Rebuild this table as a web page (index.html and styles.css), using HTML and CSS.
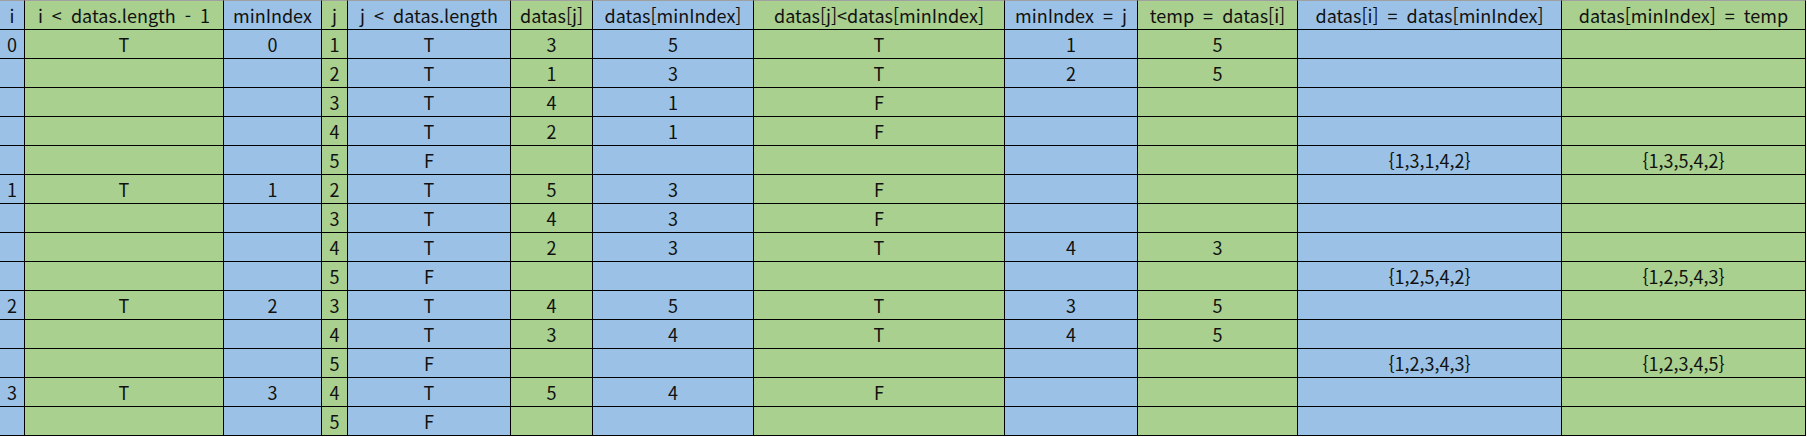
FILE: index.html
```html
<!DOCTYPE html>
<html lang="ko">
<head>
<meta charset="utf-8">
<title>Selection sort trace</title>
<link rel="stylesheet" href="styles.css">
</head>
<body>
<table class="trace">
  <colgroup>
    <col class="w-i"><col class="w-cond1"><col class="w-min"><col class="w-j"><col class="w-cond2"><col class="w-dj">
    <col class="w-dm"><col class="w-cmp"><col class="w-set"><col class="w-temp"><col class="w-swap1"><col class="w-swap2">
  </colgroup>
  <thead>
    <tr>
      <th class="b">i</th><th class="g">i &lt; datas.length - 1</th><th class="b">minIndex</th><th class="g">j</th><th class="b">j &lt; datas.length</th><th class="g">datas[j]</th>
      <th class="b">datas[minIndex]</th><th class="g">datas[j]&lt;datas[minIndex]</th><th class="b">minIndex = j</th><th class="g">temp = datas[i]</th><th class="b">datas[i] = datas[minIndex]</th><th class="g">datas[minIndex] = temp</th>
    </tr>
  </thead>
  <tbody>
    <tr><td class="b">0</td><td class="g">T</td><td class="b">0</td><td class="g">1</td><td class="b">T</td><td class="g">3</td><td class="b">5</td><td class="g">T</td><td class="b">1</td><td class="g">5</td><td class="b"></td><td class="g"></td></tr>
    <tr><td class="b"></td><td class="g"></td><td class="b"></td><td class="g">2</td><td class="b">T</td><td class="g">1</td><td class="b">3</td><td class="g">T</td><td class="b">2</td><td class="g">5</td><td class="b"></td><td class="g"></td></tr>
    <tr><td class="b"></td><td class="g"></td><td class="b"></td><td class="g">3</td><td class="b">T</td><td class="g">4</td><td class="b">1</td><td class="g">F</td><td class="b"></td><td class="g"></td><td class="b"></td><td class="g"></td></tr>
    <tr><td class="b"></td><td class="g"></td><td class="b"></td><td class="g">4</td><td class="b">T</td><td class="g">2</td><td class="b">1</td><td class="g">F</td><td class="b"></td><td class="g"></td><td class="b"></td><td class="g"></td></tr>
    <tr><td class="b"></td><td class="g"></td><td class="b"></td><td class="g">5</td><td class="b">F</td><td class="g"></td><td class="b"></td><td class="g"></td><td class="b"></td><td class="g"></td><td class="b">{1,3,1,4,2}</td><td class="g">{1,3,5,4,2}</td></tr>
    <tr><td class="b">1</td><td class="g">T</td><td class="b">1</td><td class="g">2</td><td class="b">T</td><td class="g">5</td><td class="b">3</td><td class="g">F</td><td class="b"></td><td class="g"></td><td class="b"></td><td class="g"></td></tr>
    <tr><td class="b"></td><td class="g"></td><td class="b"></td><td class="g">3</td><td class="b">T</td><td class="g">4</td><td class="b">3</td><td class="g">F</td><td class="b"></td><td class="g"></td><td class="b"></td><td class="g"></td></tr>
    <tr><td class="b"></td><td class="g"></td><td class="b"></td><td class="g">4</td><td class="b">T</td><td class="g">2</td><td class="b">3</td><td class="g">T</td><td class="b">4</td><td class="g">3</td><td class="b"></td><td class="g"></td></tr>
    <tr><td class="b"></td><td class="g"></td><td class="b"></td><td class="g">5</td><td class="b">F</td><td class="g"></td><td class="b"></td><td class="g"></td><td class="b"></td><td class="g"></td><td class="b">{1,2,5,4,2}</td><td class="g">{1,2,5,4,3}</td></tr>
    <tr><td class="b">2</td><td class="g">T</td><td class="b">2</td><td class="g">3</td><td class="b">T</td><td class="g">4</td><td class="b">5</td><td class="g">T</td><td class="b">3</td><td class="g">5</td><td class="b"></td><td class="g"></td></tr>
    <tr><td class="b"></td><td class="g"></td><td class="b"></td><td class="g">4</td><td class="b">T</td><td class="g">3</td><td class="b">4</td><td class="g">T</td><td class="b">4</td><td class="g">5</td><td class="b"></td><td class="g"></td></tr>
    <tr><td class="b"></td><td class="g"></td><td class="b"></td><td class="g">5</td><td class="b">F</td><td class="g"></td><td class="b"></td><td class="g"></td><td class="b"></td><td class="g"></td><td class="b">{1,2,3,4,3}</td><td class="g">{1,2,3,4,5}</td></tr>
    <tr><td class="b">3</td><td class="g">T</td><td class="b">3</td><td class="g">4</td><td class="b">T</td><td class="g">5</td><td class="b">4</td><td class="g">F</td><td class="b"></td><td class="g"></td><td class="b"></td><td class="g"></td></tr>
    <tr><td class="b"></td><td class="g"></td><td class="b"></td><td class="g">5</td><td class="b">F</td><td class="g"></td><td class="b"></td><td class="g"></td><td class="b"></td><td class="g"></td><td class="b"></td><td class="g"></td></tr>
  </tbody>
</table>
</body>
</html>
```

FILE: styles.css
```css
html, body {
  margin: 0;
  padding: 0;
  background: #ffffff;
}

.trace {
  border-collapse: separate;
  border-spacing: 0;
  table-layout: fixed;
  width: 1806px;
  font-family: "Noto Sans CJK KR", "Noto Sans", sans-serif;
  font-size: 18px;
  color: #111111;
}

.w-i { width: 25px; }
.w-cond1 { width: 199px; }
.w-min { width: 98px; }
.w-j { width: 26px; }
.w-cond2 { width: 163px; }
.w-dj { width: 82px; }
.w-dm { width: 161px; }
.w-cmp { width: 251px; }
.w-set { width: 133px; }
.w-temp { width: 160px; }
.w-swap1 { width: 264px; }
.w-swap2 { width: 244px; }

.trace th,
.trace td {
  box-sizing: border-box;
  height: 29px;
  padding: 0 0 2px 0;
  border-right: 1px solid #000000;
  border-bottom: 1px solid #000000;
  text-align: center;
  vertical-align: bottom;
  font-weight: normal;
  line-height: 24px;
  white-space: nowrap;
  overflow: hidden;
}

.trace thead th {
  height: 30px;
  border-top: 1px solid #a0a0a0;
  word-spacing: 4px;
}

.b { background: #9bc2e6; }
.g { background: #a9d08e; }
```
